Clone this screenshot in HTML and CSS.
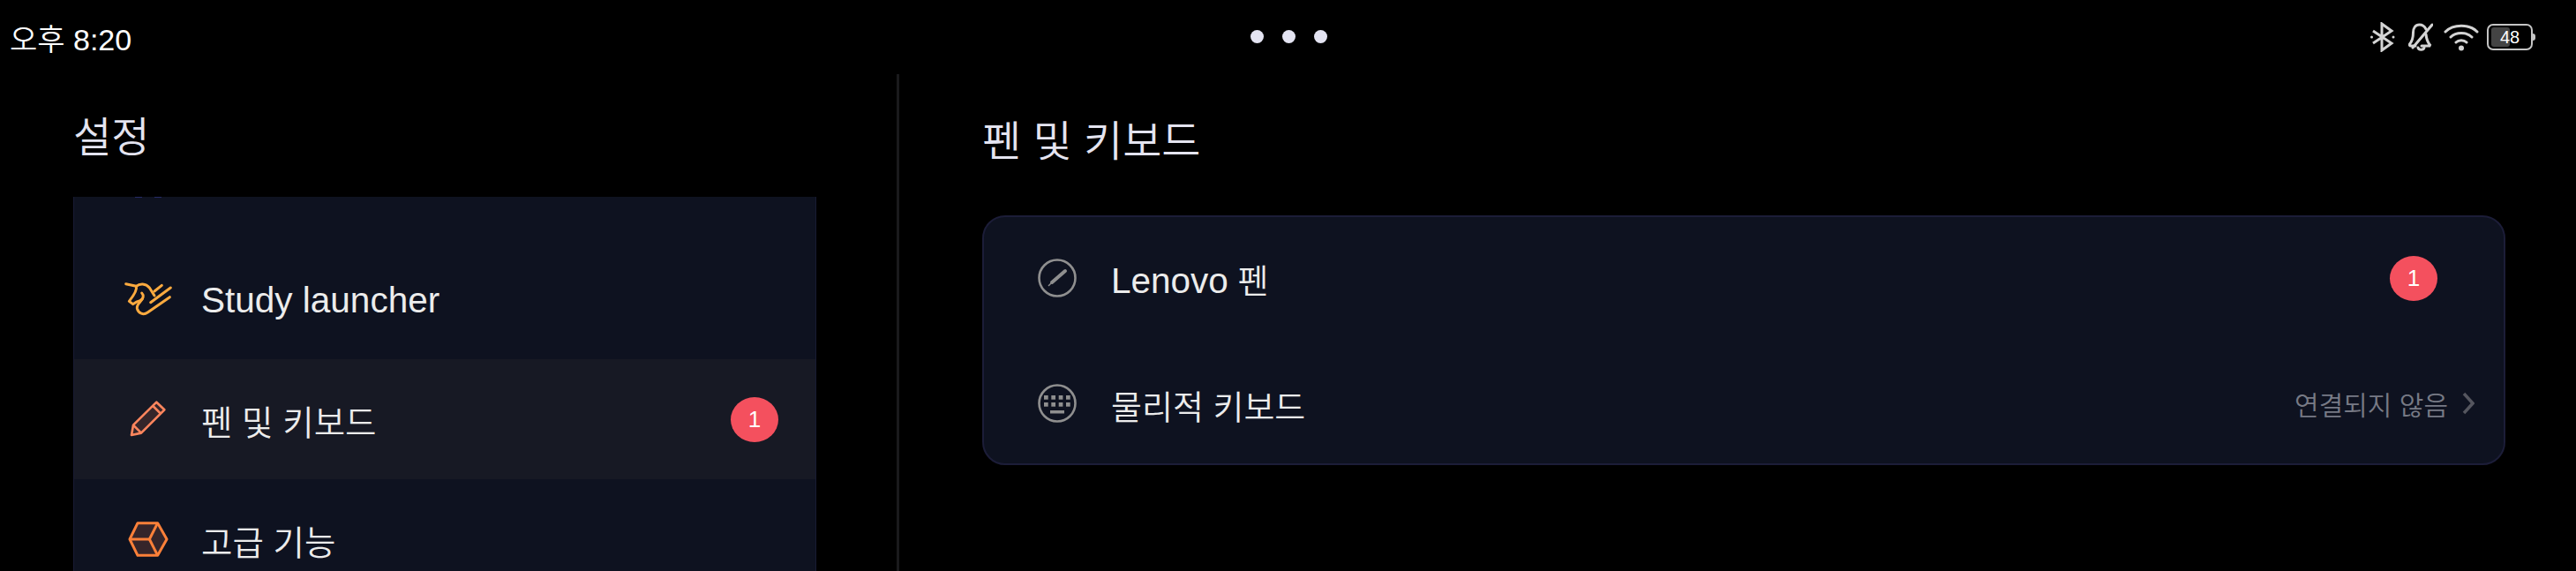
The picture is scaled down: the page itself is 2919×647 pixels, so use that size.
FILE: index.html
```html
<!DOCTYPE html>
<html lang="ko">
<head>
    <meta charset="UTF-8">
    <title>설정</title>
    <link rel="stylesheet" href="styles.css">
</head>
<body>
    <div class="statusbar">
        <span class="time">오후 8:20</span>
        <div class="dots"><i></i><i></i><i></i></div>
        <div class="status-icons">
            <svg class="ic-bt" width="28" height="34" viewBox="0 0 28 34" fill="none" stroke="#d4d4d4" stroke-width="3">
                <path d="M3 10 L24 24 L13 32 V2 L24 10 L3 24"/>
                <circle cx="1.500" cy="17" r="1.500" fill="#d4d4d4" stroke="none"/>
                <circle cx="26" cy="17" r="1.500" fill="#d4d4d4" stroke="none"/>
            </svg>
            <svg class="ic-bell" width="28" height="32" viewBox="0 0 28 32" fill="none" stroke="#d4d4d4" stroke-width="3" stroke-linecap="round">
                <path d="M20 7 C18 3 15 2 12.500 2 C8 2 5.500 6 5.500 11 C5.500 17 4 21 1.500 24 C1 25 1.500 26 3 26 H8"/>
                <path d="M20 13 C20.500 18 22 22 24.500 25 L24 26 H15"/>
                <path d="M27 2 L5 28"/>
                <path d="M11 28 C12 31 17 31 18 28"/>
            </svg>
            <svg class="ic-wifi" width="40" height="32" viewBox="0 0 40 32" fill="none" stroke="#d4d4d4" stroke-width="3" stroke-linecap="round">
                <path d="M2 10 C11 1 29 1 38 10"/>
                <path d="M8 16 C14 10 26 10 32 16"/>
                <path d="M14 22 C17 19 23 19 26 22"/>
                <circle cx="20" cy="28.500" r="3" fill="#d4d4d4" stroke="none"/>
            </svg>
            <div class="battery">
                <div class="battery-fill"></div>
                <span class="battery-num">48</span>
            </div>
            <div class="battery-nub"></div>
        </div>
    </div>

    <div class="main">
        <div class="left">
            <h1 class="left-title">설정</h1>
            <div class="menu">
                <div class="menu-peek"><i></i><i></i></div>
                <div class="menu-row">
                    <svg class="menu-icon" width="57" height="50" viewBox="60 42 171 150" fill="none" stroke="#fbaa3f" stroke-width="9" stroke-linejoin="round" stroke-linecap="round">
                        <path d="M68 65 L103 73 C115 63 135 62 148 78 L165 105"/>
                        <path d="M103 73 C107 85 92 108 79 124 L92 134 C100 128 108 124 116 122 C128 116 130 104 122 96"/>
                        <path d="M124 116 C118 128 104 134 106 148 C110 166 128 172 142 162 L217 110"/>
                        <path d="M152 128 L220 78"/>
                        <path d="M165 90 L190 70"/>
                    </svg>
                    <span class="menu-label latin">Study launcher</span>
                </div>
                <div class="menu-row active">
                    <svg class="menu-icon" width="57" height="50" viewBox="60 30 171 150" fill="#35262a" stroke="#fc855d" stroke-width="8" stroke-linejoin="round">
                        <path d="M172 47 L199 73 L120 152 L87 159 L93 125 Z"/>
                        <path d="M160 60 L186 86"/>
                        <path d="M93 125 L120 152" fill="none"/>
                    </svg>
                    <span class="menu-label">펜 및 키보드</span>
                    <span class="badge">1</span>
                </div>
                <div class="menu-row">
                    <svg class="menu-icon" width="57" height="50" viewBox="60 438 171 150" fill="#35252a" stroke="#fb8039" stroke-width="9" stroke-linejoin="round">
                        <path d="M108 458 H176 L207 513 L176 568 H108 L81 513 Z"/>
                        <path d="M81 513 H148 L176 458" fill="none"/>
                        <path d="M148 513 L176 568" fill="none"/>
                    </svg>
                    <span class="menu-label">고급 기능</span>
                </div>
            </div>
        </div>

        <div class="right">
            <h2 class="right-title">펜 및 키보드</h2>
            <div class="card">
                <div class="card-row pen-row">
                    <svg class="card-icon" width="44" height="44" viewBox="0 0 44 44" fill="none" stroke="#8f8f8f" stroke-width="2.600">
                        <circle cx="22" cy="22" r="20.500"/>
                        <path d="M31 14 L16 27" stroke-width="4" stroke-linecap="round"/>
                        <path d="M15 28 L12 31" stroke-width="1.500"/>
                    </svg>
                    <span class="card-label"><span class="latin">Lenovo</span> 펜</span>
                    <span class="badge card-badge">1</span>
                </div>
                <div class="card-row keyboard-row">
                    <svg class="card-icon" width="44" height="44" viewBox="0 0 44 44" fill="none" stroke="#8f8f8f" stroke-width="2.600">
                        <circle cx="22" cy="22" r="20.500"/>
                        <g fill="#8f8f8f" stroke="none">
                            <rect x="7" y="13" width="4.700" height="4.700"/><rect x="15.300" y="13" width="4.700" height="4.700"/>
                            <rect x="23.700" y="13" width="4.700" height="4.700"/><rect x="32" y="13" width="4.700" height="4.700"/>
                            <rect x="7" y="21" width="4.700" height="4.700"/><rect x="15.300" y="21" width="4.700" height="4.700"/>
                            <rect x="23.700" y="21" width="4.700" height="4.700"/><rect x="32" y="21" width="4.700" height="4.700"/>
                            <rect x="14" y="30" width="16" height="3.500"/>
                        </g>
                    </svg>
                    <span class="card-label phys-label">물리적 키보드</span>
                    <span class="card-value">연결되지 않음</span>
                    <svg class="chevron" width="14" height="26" viewBox="0 0 14 26" fill="none" stroke="#55565f" stroke-width="3.500">
                        <path d="M2 2 L12 13 L2 24"/>
                    </svg>
                </div>
            </div>
        </div>
    </div>
</body>
</html>
```

FILE: styles.css
```css
html, body {
    margin: 0;
    height: 100%;
    overflow: hidden;
}
body {
    background-color: #000;
    color: #ececec;
    font-family: "Liberation Sans", "Noto Sans CJK KR", sans-serif;
    font-weight: 350;
    display: flex;
    flex-direction: column;
}

/* top bar */
.statusbar {
    height: 84px;
    flex: none;
    display: flex;
    align-items: center;
    justify-content: space-between;
    padding: 0 46px 0 11px;
    position: relative;
}
.time {
    font-size: 34px;
    color: #fff;
}
.dots {
    position: absolute;
    left: 1417px;
    top: 34px;
    display: flex;
    gap: 21px;
}
.dots i {
    width: 15px;
    height: 15px;
    border-radius: 50%;
    background-color: #e4e4f2;
}
.status-icons {
    display: flex;
    align-items: center;
}
.ic-bell { margin-left: 15px; }
.ic-wifi { margin-left: 12px; }
.battery {
    margin-left: 9px;
    width: 52px;
    height: 30px;
    box-sizing: border-box;
    border: 2.500px solid #c4c4c4;
    border-radius: 7px;
    display: flex;
    align-items: center;
    justify-content: center;
    position: relative;
}
.battery-fill {
    position: absolute;
    left: 3px;
    top: 2px;
    bottom: 2px;
    width: 21px;
    background-color: #444;
    border-radius: 3px;
}
.battery-num {
    position: relative;
    font-size: 20px;
    color: #fff;
}
.battery-nub {
    width: 3px;
    height: 8px;
    background-color: #c4c4c4;
    border-radius: 0 3px 3px 0;
}

/* two panes */
.main {
    flex: 1;
    display: flex;
    min-height: 0;
}
.left {
    width: 1019px;
    flex: none;
    box-sizing: border-box;
    padding-left: 83px;
    border-right: 3px solid #1a1a1c;
}
.left-title {
    margin: 0;
    height: 139px;
    box-sizing: border-box;
    padding-top: 37px;
    font-size: 47px;
    font-weight: 350;
    color: #e4e4f0;
    line-height: 70px;
}
.menu {
    width: 842px;
    box-sizing: border-box;
    height: 424px;
    background-color: #0e1220;
    border-left: 1px solid #181b33;
    border-right: 1px solid #181b33;
}
.menu-peek {
    height: 48px;
    display: flex;
    gap: 14px;
    padding-left: 69px;
}
.menu-peek i {
    width: 8px;
    height: 1px;
    background-color: #262b66;
}
.menu-row {
    height: 136px;
    display: flex;
    align-items: center;
    padding: 0 42px 0 56px;
}
.menu-row.active {
    background-color: #171924;
}
.menu-icon {
    flex: none;
    margin-right: 31px;
}
.menu-label {
    flex: 1;
    font-size: 38.500px;
    padding-top: 2px;
}
.latin {
    font-size: 40.500px;
}
.badge {
    width: 54px;
    height: 51px;
    flex: none;
    border-radius: 50%;
    background-color: #f4505e;
    color: #fff;
    font-size: 26px;
    display: flex;
    align-items: center;
    justify-content: center;
}

.right {
    flex: 1;
    padding-left: 94px;
    padding-right: 80px;
}
.right-title {
    margin: 0;
    height: 160px;
    box-sizing: border-box;
    padding-top: 39px;
    font-size: 48px;
    font-weight: 350;
    line-height: 76px;
    color: #e4e4f0;
}
.card {
    box-sizing: border-box;
    height: 283px;
    border: 2px solid #1c1d38;
    border-radius: 26px;
    background-color: #0e1220;
    display: flex;
    flex-direction: column;
}
.card-row {
    display: flex;
    align-items: center;
    box-sizing: border-box;
    padding: 0 33px 0 61px;
}
.pen-row {
    height: 138px;
}
.keyboard-row {
    height: 141px;
    padding-top: 5px;
}
.card-icon {
    flex: none;
    margin-right: 39px;
}
.card-label {
    flex: 1;
    font-size: 38px;
}
.phys-label {
    padding-top: 2px;
}
.card-badge {
    margin-right: 42px;
}
.card-value {
    font-size: 30px;
    color: #777a85;
}
.chevron {
    flex: none;
    margin-left: 16px;
}
```
